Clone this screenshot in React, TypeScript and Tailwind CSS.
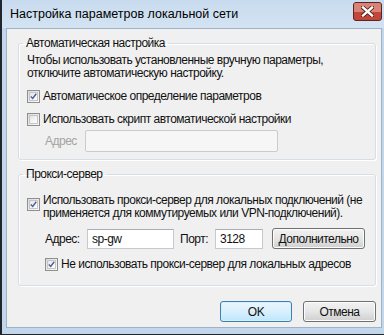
import type { ReactNode } from 'react'

const font = { fontFamily: '"Liberation Sans", Arial, sans-serif' }

function Check({ checked }: { checked?: boolean }) {
  return (
    <div className="w-[13px] h-[13px] shrink-0 border border-[#8e8f8f] bg-gradient-to-br from-[#dcdcdc] to-[#fbfbfb] p-[1px]">
      <div className="w-full h-full border border-[#c6c6c6] bg-gradient-to-br from-[#e4e4e4] to-[#ffffff] flex items-center justify-center">
        {checked && (
          <svg width="9" height="9" viewBox="0 0 9 9">
            <path d="M1 4.5 L3.5 7 L8 1" fill="none" stroke="#4a5f97" strokeWidth="1.8" />
          </svg>
        )}
      </div>
    </div>
  )
}

function Group({ title, children }: { title: string; children: ReactNode }) {
  return (
    <fieldset className="border border-[#d5dfe5] rounded-[3px] shadow-[inset_1px_1px_0_#fff,1px_1px_0_#fff] pl-[8px] pr-[6px]">
      <legend className="-ml-[4px] px-[3px] leading-[16px]">{title}</legend>
      {children}
    </fieldset>
  )
}

function Button({ children, primary, className }: { children: ReactNode; primary?: boolean; className?: string }) {
  return (
    <div
      className={`h-[21px] rounded-[3px] border flex items-center justify-center ${
        primary
          ? 'border-[#3c7fb1] bg-gradient-to-b from-[#eaf6fd] via-[#d9f0fc] to-[#bee6fd] shadow-[inset_0_0_0_1px_#d4f0fc]'
          : 'border-[#707070] bg-gradient-to-b from-[#f2f2f2] via-[#e6e6e6] to-[#cfcfcf] shadow-[inset_0_0_0_1px_#fcfcfc]'
      } ${className ?? ''}`}
    >
      {children}
    </div>
  )
}

export default function App() {
  return (
    <div
      className="w-[384px] h-[335px] flex flex-col bg-[#c3d7ec] border-l-2 border-b border-[#20262d] text-[12px] text-[#111] whitespace-nowrap overflow-hidden"
      style={font}
    >
      {/* Title bar */}
      <div className="h-[28px] shrink-0 flex items-center pl-[8px] pr-[2px] bg-gradient-to-b from-[#c8dbee] to-[#d3e3f2]">
        <span className="text-[12.5px] text-black flex-1 pt-[1px]">Настройка параметров локальной сети</span>
        <div className="relative w-[29px] h-[19px] mb-[6px] rounded-[3px] border border-[#5e2420] bg-[#c2463a] flex items-center justify-center overflow-hidden">
          <div className="absolute inset-x-0 top-0 h-[9px] bg-[#d98377]" />
          <svg width="13" height="11" viewBox="0 0 13 11" className="relative">
            <path d="M2 1.5 L11 9.5 M11 1.5 L2 9.5" stroke="#4a1a16" strokeWidth="4" strokeLinecap="square" />
            <path d="M2 1.5 L11 9.5 M11 1.5 L2 9.5" stroke="#fff" strokeWidth="2.4" strokeLinecap="square" />
          </svg>
        </div>
      </div>

      {/* Client area */}
      <div className="ml-[4px] mr-[2px] h-[300px] border border-[#9fb3c7] bg-[#f0f0f0] pl-[11px] pr-[5px] pt-[6px] flex flex-col overflow-hidden tracking-[-0.5px]">
        <Group title="Автоматическая настройка">
          <p className="leading-[13px] mt-[3px]">
            Чтобы использовать установленные вручную параметры,
            <br />
            отключите автоматическую настройку.
          </p>
          <div className="flex items-center gap-[3px] mt-[9px] h-[14px]">
            <Check checked />
            <span>Автоматическое определение параметров</span>
          </div>
          <div className="flex items-center gap-[3px] mt-[9px] h-[14px]">
            <Check />
            <span>Использовать скрипт автоматической настройки</span>
          </div>
          <div className="flex items-center mt-[4px] mb-[7px] pl-[18px]">
            <span className="w-[40px] text-[#a3a3a3]">Адрес</span>
            <div className="w-[193px] h-[22px] border border-[#cbcbcb] rounded-[2px] bg-[#f6f6f6]" />
          </div>
        </Group>

        <div className="mt-[6px]">
          <Group title="Прокси-сервер">
            <div className="flex items-start gap-[3px] mt-[12px]">
              <div className="pt-[4px]">
                <Check checked />
              </div>
              <p className="leading-[13px]">
                Использовать прокси-сервер для локальных подключений (не
                <br />
                применяется для коммутируемых или VPN-подключений).
              </p>
            </div>
            <div className="flex items-center mt-[8px] pl-[18px]">
              <span className="w-[42px]">Адрес:</span>
              <div className="w-[87px] h-[20px] border border-[#c5c9d0] border-t-[#abadb3] bg-white flex items-center pl-[4px]">
                sp-gw
              </div>
              <span className="ml-[6px] w-[35px]">Порт:</span>
              <div className="w-[48px] h-[20px] border border-[#c5c9d0] border-t-[#abadb3] bg-white flex items-center pl-[4px]">
                3128
              </div>
              <Button className="ml-[9px] w-[93px] h-[20px]">Дополнительно</Button>
            </div>
            <div className="flex items-center gap-[3px] mt-[8px] mb-[14px] pl-[18px] h-[14px]">
              <Check checked />
              <span>Не использовать прокси-сервер для локальных адресов</span>
            </div>
          </Group>
        </div>

        <div className="flex justify-end gap-[11px] mt-[15px]">
          <Button primary className="w-[72px]">OK</Button>
          <Button className="w-[73px]">Отмена</Button>
        </div>
      </div>
    </div>
  )
}
